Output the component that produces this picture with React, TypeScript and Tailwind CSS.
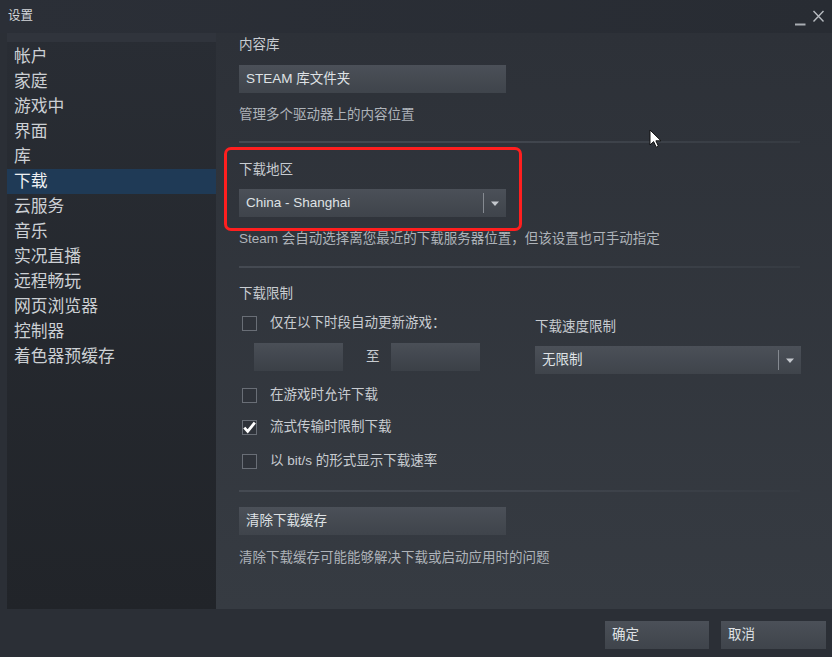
import type { ReactNode } from "react";

const font = "font-['Liberation_Sans','Noto_Sans_CJK_SC',sans-serif]";

const navItems = [
  "帐户",
  "家庭",
  "游戏中",
  "界面",
  "库",
  "下载",
  "云服务",
  "音乐",
  "实况直播",
  "远程畅玩",
  "网页浏览器",
  "控制器",
  "着色器预缓存",
];

const Separator = ({ className = "" }: { className?: string }) => (
  <div
    className={`h-[2px] w-[561px] bg-gradient-to-r from-[#454a52] via-[#41464e] to-[#363b42] ${className}`}
  />
);

const Label = ({ children, className = "" }: { children: ReactNode; className?: string }) => (
  <div className={`h-[20px] text-[13.5px] leading-[20px] text-[#c8ccd1] ${className}`}>{children}</div>
);

const Hint = ({ children, className = "" }: { children: ReactNode; className?: string }) => (
  <div className={`h-[20px] text-[13.5px] leading-[20px] text-[#aeb3b9] ${className}`}>{children}</div>
);

const Button = ({ children, className = "" }: { children: ReactNode; className?: string }) => (
  <div
    className={`flex h-[28px] items-center bg-gradient-to-b from-[#4b5058] to-[#3f444b] pl-[7px] text-[13.5px] text-[#dfe2e5] ${className}`}
  >
    {children}
  </div>
);

const Select = ({ value, className = "" }: { value: string; className?: string }) => (
  <div
    className={`flex h-[28px] items-center bg-gradient-to-b from-[#4b5058] to-[#3f444b] pl-[7px] text-[13.5px] text-[#dfe2e5] ${className}`}
  >
    <span className="flex-1">{value}</span>
    <span className="h-[20px] w-px bg-[#858a91]" />
    <svg width="22" height="28" viewBox="0 0 22 28" className="shrink-0">
      <path d="M7 12.5h8l-4 4.5z" fill="#c4c8cd" />
    </svg>
  </div>
);

const Checkbox = ({ checked = false, label, className = "" }: { checked?: boolean; label: string; className?: string }) => (
  <div className={`flex h-[20px] items-center pl-[3px] ${className}`}>
    <div className="flex size-[15px] items-center justify-center border-[1.5px] border-[#696e76] bg-[#2f333a]">
      {checked ? (
        <svg width="13" height="13" viewBox="0 0 13 13">
          <path d="M1.3 6.6l3.4 3.8L11.8 1.6" fill="none" stroke="#ffffff" strokeWidth="2.8" />
        </svg>
      ) : null}
    </div>
    <span className="ml-[13px] text-[13.5px] leading-[20px] text-[#c8ccd1]">{label}</span>
  </div>
);

export default function App() {
  return (
    <div className={`flex h-[657px] w-[832px] flex-col bg-[#2b2f36] ${font}`}>
      {/* title bar */}
      <div className="flex h-[33px] shrink-0 items-center justify-between bg-gradient-to-r from-[#2b2f37] to-[#282c33] pl-[8px] pr-[7px]">
        <span className="text-[12.5px] text-[#d4d7db]">设置</span>
        <div className="flex items-center gap-[6px] pt-[1px]">
          <svg width="11" height="20" viewBox="0 0 11 20">
            <path d="M0 17.5h10.5" stroke="#a9adb3" strokeWidth="2" />
          </svg>
          <svg width="13" height="20" viewBox="0 0 13 20">
            <path d="M1.5 4l10 10.5M11.5 4l-10 10.5" stroke="#b7bbc0" strokeWidth="1.4" />
          </svg>
        </div>
      </div>

      <div className="flex h-[576px] shrink-0">
        {/* sidebar */}
        <div className="ml-[7px] w-[209px] bg-gradient-to-b from-[#292d34] to-[#212429]">
          <div className="h-[9px] bg-[#30343c]" />
          <div className="pt-[2px]">
            {navItems.map((item) => (
              <div
                key={item}
                className={`h-[25px] pl-[7px] text-[16.8px] leading-[25px] ${
                  item === "下载" ? "bg-[#1f3a56] text-[#eef0f2]" : "text-[#ccd0d4]"
                }`}
              >
                {item}
              </div>
            ))}
          </div>
        </div>

        {/* settings panel */}
        <div className="relative flex-1 bg-gradient-to-b from-[#2d3138] to-[#363b42] pl-[23px] pt-[2px]">
          <Label>内容库</Label>
          <Button className="mt-[10px] w-[267px]">STEAM 库文件夹</Button>
          <Hint className="mt-[12px]">管理多个驱动器上的内容位置</Hint>
          <Separator className="mt-[16px]" />

          <Label className="mt-[17px]">下载地区</Label>
          <Select value="China - Shanghai" className="mt-[9px] w-[267px]" />
          <Hint className="mt-[12px]">Steam 会自动选择离您最近的下载服务器位置，但该设置也可手动指定</Hint>
          <Separator className="mt-[17px]" />

          <Label className="mt-[16px]">下载限制</Label>
          <div className="flex">
            <div className="w-[296px]">
              <Checkbox label="仅在以下时段自动更新游戏：" className="mt-[9px]" />
              <div className="mt-[10px] flex items-center pl-[15px]">
                <div className="h-[28px] w-[89px] bg-gradient-to-b from-[#4a4f57] to-[#3b4047]" />
                <span className="ml-[23px] text-[13.5px] text-[#c8ccd1]">至</span>
                <div className="ml-[11px] h-[28px] w-[89px] bg-gradient-to-b from-[#4a4f57] to-[#3b4047]" />
              </div>
              <Checkbox label="在游戏时允许下载" className="mt-[14px]" />
              <Checkbox checked label="流式传输时限制下载" className="mt-[12px]" />
              <Checkbox label="以 bit/s 的形式显示下载速率" className="mt-[14px]" />
            </div>
            <div>
              <Label className="mt-[13px]">下载速度限制</Label>
              <Select value="无限制" className="mt-[9px] w-[266px]" />
            </div>
          </div>
          <Separator className="mt-[19px]" />

          <Button className="mt-[15px] w-[267px]">清除下载缓存</Button>
          <Hint className="mt-[13px]">清除下载缓存可能能够解决下载或启动应用时的问题</Hint>

          {/* highlight around the region picker */}
          <div className="absolute left-[8px] top-[114px] h-[84px] w-[298px] rounded-[7px] border-[3px] border-[#ff1f1f]" />

          {/* mouse pointer */}
          <svg width="13" height="20" viewBox="0 0 13 20" className="absolute left-[433px] top-[96px]">
            <path d="M1 1v15l3.6-3.4 2.6 5.6 2.2-1-2.5-5.4H12z" fill="#ffffff" stroke="#111111" strokeWidth="1" />
          </svg>
        </div>
      </div>

      {/* footer buttons */}
      <div className="flex flex-1 items-start justify-end gap-[12px] bg-[#2b2f36] pr-[6px] pt-[12px]">
        <Button className="w-[104px]">确定</Button>
        <Button className="w-[105px]">取消</Button>
      </div>
    </div>
  );
}
